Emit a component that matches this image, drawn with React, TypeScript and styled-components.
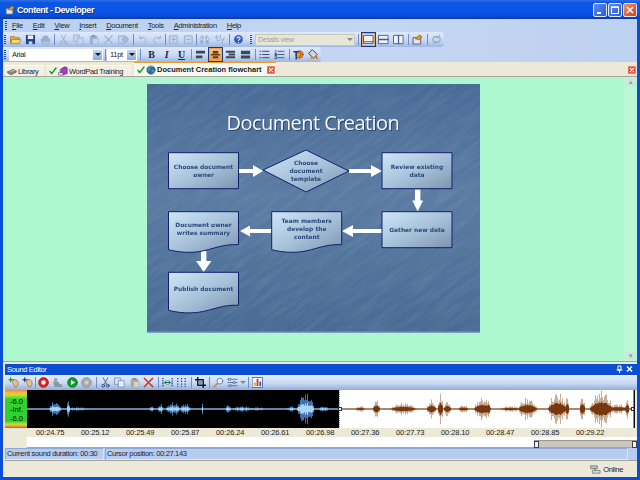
import React, { ReactNode } from "react";
import styled, { createGlobalStyle } from "styled-components";

const UI_FONT = `"Liberation Sans", Arial, sans-serif`;

const GlobalStyle = createGlobalStyle`
  html, body {
    margin: 0;
    padding: 0;
    overflow: hidden;
    background: #0a52de;
  }
  svg {
    flex: none;
  }
`;

const Window = styled.div`
  width: 640px;
  height: 480px;
  box-sizing: border-box;
  display: flex;
  flex-direction: column;
  padding: 0 3px 3px;
  background: #0a4ed8;
  font-family: ${UI_FONT};
  font-size: 7.5px;
  letter-spacing: -0.32px;
  color: #1a1a1a;
`;

const TitleBar = styled.div`
  height: 19px;
  flex: none;
  margin: 0 -3px;
  padding: 1px 3px 0 5px;
  box-sizing: border-box;
  display: flex;
  align-items: center;
  gap: 1px;
  background: linear-gradient(#2a70ea 0, #0c55e2 3px, #0a55e8 12px, #0a48d0 17px, #06389f 100%);
`;

const TitleText = styled.span`
  flex: 1;
  margin-left: 1px;
  color: #fff;
  font-size: 9px;
  font-weight: bold;
  letter-spacing: -0.45px;
  text-shadow: 1px 1px 0 #0a2f90;
`;

const WinButton = styled.div<{ $red?: boolean }>`
  width: 14px;
  height: 14px;
  box-sizing: border-box;
  border: 1px solid #dfe8fb;
  border-radius: 2px;
  background: ${(p) => (p.$red ? "linear-gradient(135deg,#f0905c,#d8401c)" : "linear-gradient(135deg,#5c8cf0,#2a58d8)")};
  display: flex;
  align-items: center;
  justify-content: center;
`;

const Chrome = styled.div`
  flex: none;
  background: linear-gradient(90deg, #bcd0ef, #c3d6f3 60%, #bdd1f0);
`;

const MenuBar = styled.div`
  height: 13px;
  display: flex;
  align-items: center;
  padding-left: 2px;
`;

const MenuItem = styled.span`
  margin: 0 10px 0 0;
  color: #20242c;
  &:first-of-type {
    margin-left: 1px;
  }
`;

const Grip = styled.div<{ $gap?: number }>`
  width: 2px;
  height: 9px;
  margin-right: ${(p) => p.$gap ?? 4}px;
  flex: none;
  background-image: linear-gradient(#2c4a80 50%, transparent 50%);
  background-size: 2px 2px;
`;

const ToolRow = styled.div`
  height: 15px;
  display: flex;
`;

const Toolbar = styled.div<{ $width: number; $pad?: number }>`
  width: ${(p) => p.$width}px;
  height: 15px;
  flex: none;
  box-sizing: border-box;
  padding-left: ${(p) => p.$pad ?? 1}px;
  display: flex;
  align-items: center;
  background: linear-gradient(#dfe9f9, #c9d9f3 55%, #9db7e2);
`;

const EndedBar = styled(Toolbar)`
  border-radius: 0 3px 3px 0;
`;

const ToolButton = styled.div<{ $active?: boolean; $pale?: boolean }>`
  width: 15px;
  height: 15px;
  flex: none;
  box-sizing: border-box;
  display: flex;
  align-items: center;
  justify-content: center;
  ${(p) =>
    p.$active &&
    `border: 1px solid #1c3c80; background: linear-gradient(#f8cc8c, #f09840); box-shadow: inset 0 0 0 1px #f0a050;`}
  ${(p) => p.$pale && `background: #dce8f8;`}
`;

const Sep = styled.div<{ $w?: number }>`
  width: ${(p) => p.$w ?? 4}px;
  height: 11px;
  flex: none;
  background: linear-gradient(#6f8fc4, #6f8fc4) center / 1px 100% no-repeat;
`;

const Combo = styled.div<{ $width: number; $disabled?: boolean }>`
  width: ${(p) => p.$width}px;
  height: 12px;
  flex: none;
  box-sizing: border-box;
  display: flex;
  align-items: center;
  justify-content: space-between;
  background: ${(p) => (p.$disabled ? "#e8e6d6" : "#fff")};
  color: ${(p) => (p.$disabled ? "#a2a49c" : "#202020")};
  padding-left: 2px;
  border: 1px solid ${(p) => (p.$disabled ? "#c4c8c4" : "#fff")};
`;

const ComboArrow = styled.div<{ $disabled?: boolean }>`
  width: 9px;
  height: 100%;
  display: flex;
  align-items: center;
  justify-content: center;
  background: ${(p) => (p.$disabled ? "transparent" : "linear-gradient(#c4d5f1, #8faad8)")};
  &::after {
    content: "";
    border: 3px solid transparent;
    border-top: 3px solid ${(p) => (p.$disabled ? "#888" : "#101828")};
    border-bottom: 0;
  }
`;

const TabStrip = styled.div`
  height: 15px;
  flex: none;
  box-sizing: border-box;
  display: flex;
  align-items: flex-end;
  padding-left: 2px;
  background: #ece9d8;
  border-bottom: 1px solid #a8a69c;
`;

const Tab = styled.div<{ $width: number; $active?: boolean }>`
  width: ${(p) => p.$width}px;
  height: ${(p) => (p.$active ? 14 : 11)}px;
  margin-right: ${(p) => (p.$active ? 0 : 3)}px;
  box-sizing: border-box;
  display: flex;
  align-items: center;
  gap: 1px;
  padding-left: ${(p) => (p.$active ? 3 : 2)}px;
  white-space: nowrap;
  background: ${(p) => (p.$active ? "#f8f8f2" : "#f2f0e4")};
  border-top: 1px solid ${(p) => (p.$active ? "#e69a28" : "#fff")};
  font-weight: ${(p) => (p.$active ? "bold" : "normal")};
  letter-spacing: ${(p) => (p.$active ? "0" : "-0.36px")};
  color: #202020;
`;

const TabClose = styled.div`
  width: 8px;
  height: 8px;
  margin-left: 4px;
  flex: none;
  display: flex;
`;

const StripSpacer = styled.div`
  flex: 1;
`;

const StripClose = styled.div`
  width: 8px;
  height: 8px;
  margin: 0 1px 2px 0;
  display: flex;
`;

const ContentRow = styled.div`
  flex: 1;
  min-height: 0;
  display: flex;
  background: #aef8cf;
`;

const Canvas = styled.div`
  flex: 1;
  display: flex;
  justify-content: center;
  padding-top: 7px;
`;

const SlideSvg = styled.svg`
  width: 333px;
  height: 249px;
  display: block;
  filter: blur(0.3px);
`;

const ScrollTrack = styled.div`
  width: 13px;
  flex: none;
  display: flex;
  flex-direction: column;
  justify-content: space-between;
  background: #b9f7d6;
`;

const ScrollBtn = styled.div`
  height: 8px;
  margin: 1px;
  background: #cfe6dc;
  display: flex;
  align-items: center;
  justify-content: center;
  color: #8a9aa8;
  font-size: 6px;
  line-height: 1;
`;

const SoundPanel = styled.div`
  flex: none;
  background: #ece9d8;
  border-top: 1px solid #a8a69c;
  padding: 2px 0 0 2px;
  display: flex;
  flex-direction: column;
`;

const PanelHeader = styled.div`
  height: 11px;
  display: flex;
  align-items: center;
  padding: 0 2px;
  color: #fff;
  background: #0a4fd2;
`;

const PanelTitle = styled.span`
  flex: 1;
`;

const SoundBar = styled.div`
  height: 15px;
  display: flex;
  align-items: center;
  padding-left: 1px;
  background: linear-gradient(#e4edfb, #c8d9f3 55%, #92aedc);
`;

const SoundBtn = styled.div<{ $w?: number }>`
  width: ${(p) => p.$w ?? 14.5}px;
  height: 15px;
  flex: none;
  display: flex;
  align-items: center;
  justify-content: center;
`;

const WaveRow = styled.div`
  height: 38px;
  display: flex;
`;

const Meter = styled.div`
  width: 22px;
  flex: none;
  box-sizing: border-box;
  display: flex;
  flex-direction: column;
  justify-content: center;
  padding: 3px 4px 0 0;
  text-align: right;
  font-size: 7.6px;
  letter-spacing: 0;
  line-height: 8.6px;
  color: #061006;
  background: linear-gradient(#e88a48 0, #f4c040 8%, #b8e040 14%, #30d030 24%, #30d030 82%, #c0e040 90%, #f0a030 95%, #e04828 100%);
`;

const WaveSvg = styled.svg`
  width: 608px;
  height: 38px;
  display: block;
`;

const RulerRow = styled.div`
  height: 9px;
  margin-left: 22px;
  display: flex;
  padding-left: 9px;
  background: #ece9d8;
`;

const RulerLabel = styled.span`
  width: 45px;
  flex: none;
  line-height: 10px;
  letter-spacing: -0.1px;
  color: #202020;
`;

const ScrollRow = styled.div`
  height: 10px;
  margin-left: 22px;
  display: flex;
  justify-content: flex-end;
  background: #fff;
  border-bottom: 1px solid #a8a69c;
`;

const WaveScroll = styled.div`
  width: 103px;
  height: 7px;
  margin-top: 3px;
  box-sizing: border-box;
  display: flex;
  justify-content: space-between;
  background: #cdc6bc;
  border-top: 1px solid #9c9890;
`;

const ScrollHandle = styled.div`
  width: 3px;
  height: 5px;
  background: #f4f4f0;
  border: 1px solid #404040;
`;

const StatusBar = styled.div`
  height: 12px;
  display: flex;
  gap: 1px;
  background: #b6cdf1;
  padding-right: 9px;
  border-bottom: 1px solid #a8a69c;
`;

const StatusPane = styled.div<{ $width?: number }>`
  ${(p) => (p.$width ? `width: ${p.$width}px; flex: none;` : "flex: 1;")}
  box-sizing: border-box;
  padding-left: 1px;
  line-height: 10px;
  white-space: nowrap;
  color: #1a2433;
  border: 1px solid #8fa9d2;
  border-right-color: #d9e5f8;
  border-bottom-color: #d9e5f8;
`;

const BottomBar = styled.div`
  flex: 1;
  min-height: 16px;
  display: flex;
  align-items: center;
  justify-content: flex-end;
  gap: 2px;
  padding-right: 1px;
  background: #ece9d8;
  color: #1a1a1a;
`;

const ResizeGrip = styled.div`
  width: 6px;
  height: 6px;
  margin: 6px 0 0 5px;
  background-image: radial-gradient(#a8a498 40%, transparent 45%);
  background-size: 2px 2px;
`;

/* ---------- icons ---------- */

const GRAY = "#98adcf";

const IconSvg = ({ size = 11, children }: { size?: number; children: ReactNode }) => (
  <svg width={size} height={size} viewBox="0 0 12 12" fill="none" strokeLinecap="round" strokeLinejoin="round">
    {children}
  </svg>
);

const icons: Record<string, ReactNode> = {
  open: (
    <>
      <path d="M1 3h4l1 1h4v6H1z" fill="#e9b040" stroke="#a06a10" strokeWidth=".8" />
      <path d="M2.5 6H12l-2 4.5H1z" fill="#f8d878" stroke="#b07a18" strokeWidth=".8" />
    </>
  ),
  save: (
    <>
      <path d="M1 1h10v10H1z" fill="#23408f" />
      <path d="M3 1.5h6v4H3z" fill="#e8eef8" />
      <path d="M4 8h4v3H4z" fill="#c8d0e0" />
    </>
  ),
  print: (
    <>
      <path d="M3 2h6v3H3zM1 5h10v4H1z" fill={GRAY} />
      <path d="M3 8h6v3H3z" fill="#b4c6e4" stroke={GRAY} strokeWidth=".7" />
    </>
  ),
  cut: (
    <>
      <path d="M3.5 1l4 7M8.5 1l-4 7" stroke={GRAY} strokeWidth="1" />
      <circle cx="3.5" cy="9.5" r="1.5" stroke={GRAY} />
      <circle cx="8.5" cy="9.5" r="1.5" stroke={GRAY} />
    </>
  ),
  copy: (
    <>
      <path d="M1 1h6v7H1z" fill="#c5d5ee" stroke={GRAY} strokeWidth=".8" />
      <path d="M5 4h6v7H5z" fill="#c5d5ee" stroke={GRAY} strokeWidth=".8" />
    </>
  ),
  paste: (
    <>
      <path d="M2 2h8v9H2z" fill={GRAY} />
      <path d="M4 1h4v2H4z" fill="#8098c0" />
      <path d="M5 5h6v6H5z" fill="#c5d5ee" stroke={GRAY} strokeWidth=".6" />
    </>
  ),
  del: <path d="M2 2l8 8M10 2l-8 8" stroke={GRAY} strokeWidth="1.3" />,
  preview: (
    <>
      <path d="M1 2h7v8H1z" fill="#c5d5ee" stroke={GRAY} />
      <circle cx="8" cy="6" r="3" fill="#a8bcdc" stroke={GRAY} />
    </>
  ),
  undo: <path d="M3 5c2-3 7-2 7 2 0 2-1 3-3 3M3 2v3h3" stroke={GRAY} strokeWidth="1" />,
  redo: <path d="M9 5C7 2 2 3 2 7c0 2 1 3 3 3M9 2v3H6" stroke={GRAY} strokeWidth="1" />,
  pageAdd: (
    <>
      <path d="M2 2h8v8H2z" fill="#c5d5ee" stroke={GRAY} />
      <path d="M4 6h4M6 4v4" stroke={GRAY} />
    </>
  ),
  pageDel: (
    <>
      <path d="M2 2h8v8H2z" fill="#c5d5ee" stroke={GRAY} />
      <path d="M4 6h4" stroke={GRAY} />
    </>
  ),
  find: (
    <>
      <path d="M1 6l2-4h1v5M11 6L9 2H8v5M5 4h2" stroke={GRAY} strokeWidth="1" />
      <circle cx="3" cy="8.5" r="2" fill={GRAY} />
      <circle cx="9" cy="8.5" r="2" fill={GRAY} />
    </>
  ),
  replace: (
    <>
      <path d="M1 4l2-2 2 2M3 2v5h3" stroke={GRAY} strokeWidth="1" />
      <path d="M7 1v4l3 2 1-3M9 7v4" stroke={GRAY} strokeWidth="1" />
    </>
  ),
  help: (
    <>
      <circle cx="6" cy="6" r="5.2" fill="#2a58c8" stroke="#e8eef8" strokeWidth=".7" />
      <path d="M4.4 4.5c.3-1.6 3.4-1.6 3.4 .2 0 1.2-1.8 1.2-1.8 2.5" stroke="#fff" strokeWidth="1.1" />
      <circle cx="6" cy="9.3" r=".7" fill="#fff" />
      <path d="M8 1l3 3" stroke="#f0a030" strokeWidth="1" />
    </>
  ),
  viewFull: (
    <>
      <path d="M1 1.5h10v9H1z" fill="#f0f4fa" stroke="#34507e" />
      <path d="M1 8.5h10" stroke="#34507e" />
    </>
  ),
  viewH: (
    <>
      <path d="M1 1.5h10v9H1z" fill="#eef2f8" stroke="#46608c" />
      <path d="M1 6h10" stroke="#46608c" strokeWidth="1.4" />
    </>
  ),
  viewV: (
    <>
      <path d="M1 1.5h10v9H1z" fill="#eef2f8" stroke="#46608c" />
      <path d="M6 1.5v9" stroke="#46608c" strokeWidth="1.4" />
    </>
  ),
  publish: (
    <>
      <path d="M1.5 4h8v7h-8z" fill="#e4e4e4" stroke="#4c5c78" />
      <path d="M4 5l4-4 3 2-3 3z" fill="#d8a020" stroke="#805010" strokeWidth=".7" />
    </>
  ),
  sync: (
    <>
      <path d="M2 7a4 4 0 0 1 7-3M10 5a4 4 0 0 1-7 3" stroke="#8fb0b8" strokeWidth="1.4" />
      <path d="M9 1v3H6M3 11V8h3" stroke="#8fb0b8" strokeWidth="1" />
    </>
  ),
  alignLeft: <path d="M1 2h10v3H1zM1 7h7v3H1z" fill="#3c4658" />,
  alignCenter: (
    <>
      <path d="M3 2h6v3H3z" fill="#6a3c20" />
      <path d="M1 5.5h10v1.5H1zM3 8h6v2H3z" fill="#5a3824" />
    </>
  ),
  alignRight: <path d="M1 2h10v2H1zM4 5h7v2H4zM1 8h10v2H1z" fill="#3c4658" />,
  justify: <path d="M1 2h10v3.6H1zM1 7h10v3.4H1z" fill="#3c4658" />,
  bullets: <path d="M4 2.5h7M4 6h7M4 9.5h7M1 2.5h1M1 6h1M1 9.5h1" stroke="#2c4068" strokeWidth="1" />,
  numbers: <path d="M4.5 2.5H11M4.5 6H11M4.5 9.5H11M2 1.5v2M1 5h2v1H1v1h2M1 8.5h2v2H1" stroke="#2c4068" strokeWidth=".9" />,
  effects: (
    <>
      <circle cx="7" cy="6" r="4" fill="#e8a020" stroke="#a04010" strokeWidth=".8" />
      <path d="M1 3h5M3.5 3v8" stroke="#283c70" strokeWidth="1.6" />
      <path d="M7 3l2 3-2 3" stroke="#d02010" strokeWidth="1" />
    </>
  ),
  fill: (
    <>
      <path d="M5 1l5 5-4 4-5-5z" fill="#d8d8d8" stroke="#283048" strokeWidth="1" />
      <path d="M9 7c1.5 1.5 2 3 1 4s-2-1-1-4z" fill="#e86018" />
      <path d="M2 9h3v2H2z" fill="#e8a020" />
    </>
  ),
  library: (
    <>
      <path d="M1 7l6-3 4 2-6 3z" fill="#c0c0b8" stroke="#505050" strokeWidth=".8" />
      <path d="M1 7v1.5L5 10.5 11 7.5V6" fill="#888" stroke="#505050" strokeWidth=".7" />
    </>
  ),
  check: <path d="M1.5 6.5l2.5 3.5L10.5 1.5" stroke="#16a018" strokeWidth="2.2" />,
  wordpad: (
    <>
      <path d="M3 4l5-3 3 1v7l-6 2-2-2z" fill="#a040c0" stroke="#50206c" strokeWidth=".7" />
      <path d="M1 8h5v3H1z" fill="#e8e0f0" stroke="#50206c" strokeWidth=".6" />
    </>
  ),
  globe: (
    <>
      <circle cx="6" cy="6" r="5" fill="#2c68c0" stroke="#1c3c78" strokeWidth=".6" />
      <path d="M3 3c2 0 3 1 2 3S3 7 2 6M7 6c2-1 3 0 3 1s-2 3-3 2z" fill="#50a848" />
      <path d="M4 1.8c1.5-.7 3-.5 4 .2" stroke="#e8f0ff" strokeWidth=".7" />
    </>
  ),
  close: (
    <>
      <path d="M0 0h12v12H0z" fill="#e8503a" />
      <path d="M.6.6h10.8v10.8H.6z" stroke="#f8b8a0" strokeWidth=".8" />
      <path d="M3.5 3.5l5 5M8.5 3.5l-5 5" stroke="#fff" strokeWidth="1.6" />
    </>
  ),
  earAdd: (
    <>
      <path d="M1 3h4M3 1v4" stroke="#108820" strokeWidth="1.2" />
      <path d="M6 3c3-1 5 1 5 4s-2 4-3 4-1-2-2-3-2-3 0-5z" fill="#e8c090" stroke="#8c6030" strokeWidth=".7" />
    </>
  ),
  earBlue: (
    <>
      <path d="M1 3h4M3 1v4" stroke="#102880" strokeWidth="1.2" />
      <path d="M6 3c3-1 5 1 5 4s-2 4-3 4-1-2-2-3-2-3 0-5z" fill="#e8c090" stroke="#8c6030" strokeWidth=".7" />
    </>
  ),
  record: (
    <>
      <circle cx="6" cy="6" r="5.4" fill="#e02018" stroke="#901010" strokeWidth=".6" />
      <circle cx="6" cy="6" r="2.4" fill="#fff" />
    </>
  ),
  people: (
    <>
      <circle cx="4" cy="3" r="2" fill="#9aa2ae" />
      <path d="M1 5h6l1 3h3v3H3z" fill="#8a94a4" />
    </>
  ),
  play: (
    <>
      <circle cx="6" cy="6" r="5.4" fill="#149830" stroke="#0c6820" strokeWidth=".6" />
      <path d="M4.4 3.2l4.4 2.8-4.4 2.8z" fill="#fff" />
    </>
  ),
  stop: (
    <>
      <circle cx="6" cy="6" r="5.4" fill="#a8a8a8" stroke="#808890" strokeWidth=".6" />
      <path d="M4 4h4v4H4z" fill="#d0d0d0" />
    </>
  ),
  scissors: (
    <>
      <path d="M3.5 1l4 7M8.5 1l-4 7" stroke="#506080" strokeWidth="1" />
      <circle cx="3.5" cy="9.5" r="1.5" stroke="#2c3c80" />
      <circle cx="8.5" cy="9.5" r="1.5" stroke="#2c3c80" />
    </>
  ),
  copyBlue: (
    <>
      <path d="M1 1h6v7H1z" fill="#d8e4f8" stroke="#7088b8" strokeWidth=".8" />
      <path d="M5 4h6v7H5z" fill="#e8eefa" stroke="#7088b8" strokeWidth=".8" />
    </>
  ),
  pasteGray: (
    <>
      <path d="M2 2h8v9H2z" fill="#b0a898" />
      <path d="M4 1h4v2H4z" fill="#908878" />
      <path d="M5 5h6v6H5z" fill="#d8d4cc" stroke="#a8a498" strokeWidth=".6" />
    </>
  ),
  redX: <path d="M1.5 1.5l9 9M10.5 1.5l-9 9" stroke="#e03818" strokeWidth="1.6" />,
  fit: (
    <>
      <path d="M1 1v10M11 1v10" stroke="#1030b0" strokeWidth="1.3" strokeDasharray="1.5 1" strokeLinecap="butt" />
      <path d="M3 6h6M3 6l2-2M3 6l2 2M9 6L7 4M9 6L7 8" stroke="#107040" strokeWidth="1" />
    </>
  ),
  markers: <path d="M2 1v10M6 1v10M10 1v10" stroke="#1030b0" strokeWidth="1.3" strokeDasharray="1.5 1.5" strokeLinecap="butt" />,
  crop: (
    <>
      <path d="M3 0v9h9M0 3h9v9" stroke="#101828" strokeWidth="1.6" />
      <path d="M4 4h4v4H4z" fill="#8098c8" />
    </>
  ),
  zoom: (
    <>
      <circle cx="7.5" cy="4.5" r="3.2" fill="#e8f0fa" stroke="#6880a8" />
      <path d="M5 7l-4 4" stroke="#c89030" strokeWidth="1.8" />
    </>
  ),
  list: (
    <>
      <path d="M1 2.5h10M1 6h10M1 9.5h10" stroke="#5878b0" strokeWidth="1.2" />
      <path d="M2 1.5h2v2H2zM7 5h2v2H7zM3 8.5h2v2H3z" fill="#e8f0fa" stroke="#304878" strokeWidth=".6" />
    </>
  ),
  spectrum: (
    <>
      <path d="M.5.5h11v11H.5z" fill="#f4f6fa" stroke="#5068a0" />
      <path d="M2 10V6h2v4z" fill="#e8a020" />
      <path d="M5 10V2h2v8z" fill="#e03818" />
      <path d="M8 10V5h2v5z" fill="#2860c8" />
    </>
  ),
  online: (
    <>
      <path d="M1 2h7v3H1z" fill="#c0c4cc" stroke="#404850" strokeWidth=".6" />
      <path d="M3 7h8v3H3z" fill="#d8dce0" stroke="#404850" strokeWidth=".6" />
      <path d="M5 5l1 2" stroke="#208830" strokeWidth="1" />
    </>
  ),
};

const Icon = ({ name, size }: { name: string; size?: number }) => <IconSvg size={size}>{icons[name]}</IconSvg>;

const TextIcon = styled.span<{ $style: string }>`
  font-family: "Liberation Serif", serif;
  font-size: 10px;
  font-weight: bold;
  color: #202838;
  font-style: ${(p) => (p.$style === "I" ? "italic" : "normal")};
  text-decoration: ${(p) => (p.$style === "U" ? "underline" : "none")};
`;

/* ---------- slide ---------- */

type Shape = { x: number; y: number; doc?: boolean; lines: string[] };

const shapes: Shape[] = [
  { x: 21.5, y: 68.7, lines: ["Choose document", "owner"] },
  { x: 235, y: 68.7, lines: ["Review existing", "data"] },
  { x: 235, y: 127.7, lines: ["Gather new data"] },
  { x: 124.7, y: 127.7, doc: true, lines: ["Team members", "develop the", "content"] },
  { x: 21.5, y: 127.7, doc: true, lines: ["Document owner", "writes summary"] },
  { x: 21.5, y: 188.3, doc: true, lines: ["Publish document"] },
];

const SHAPE_W = 70;
const SHAPE_H = 36;
const SLIDE_TEXT = { fontFamily: `"DejaVu Sans", sans-serif`, fontWeight: 700, fontSize: 5.9, letterSpacing: 0, fill: "#274a7c" };

const ShapeText = ({ cx, cy, lines }: { cx: number; cy: number; lines: string[] }) => (
  <text textAnchor="middle" {...SLIDE_TEXT}>
    {lines.map((line, i) => (
      <tspan key={line} x={cx} y={cy + (i - (lines.length - 1) / 2) * 8 + 2}>
        {line}
      </tspan>
    ))}
  </text>
);

const Arrow = ({ d }: { d: string }) => <path d={d} fill="#fff" />;

const Slide = () => (
  <SlideSvg viewBox="0 0 333 249">
    <defs>
      <linearGradient id="slideBg" x1="0" y1="0" x2="0" y2="1">
        <stop offset="0" stopColor="#486b96" />
        <stop offset=".45" stopColor="#5a7ba2" />
        <stop offset=".8" stopColor="#4f7199" />
        <stop offset="1" stopColor="#486b93" />
      </linearGradient>
      <linearGradient id="shapeBg" x1="0" y1="0" x2="1" y2="1">
        <stop offset="0" stopColor="#cfe6f8" />
        <stop offset=".55" stopColor="#a5bfd8" />
        <stop offset="1" stopColor="#7d93ad" />
      </linearGradient>
      <filter id="grain" x="0" y="0" width="100%" height="100%">
        <feTurbulence type="fractalNoise" baseFrequency="0.03 0.22" numOctaves="3" seed="7" />
        <feColorMatrix values="0 0 0 0 0.8  0 0 0 0 0.87  0 0 0 0 0.95  0.9 0 0 0 -0.33" />
      </filter>
    </defs>
    <rect width="333" height="249" fill="url(#slideBg)" />
    <g transform="rotate(-35 166 125)" opacity=".2">
      <rect x="-100" y="-100" width="540" height="450" filter="url(#grain)" />
    </g>
    <rect x="0" y="247.5" width="333" height="1.5" fill="#7c9cc0" />
    <text x="167" y="47" textAnchor="middle" textLength="173" fontFamily={`"Open Sans", sans-serif`} fontSize="20" fill="#0c1c38" opacity=".55">
      Document Creation
    </text>
    <text x="166" y="46" textAnchor="middle" textLength="173" fontFamily={`"Open Sans", sans-serif`} fontSize="20" fill="#f4f8fc">
      Document Creation
    </text>

    <Arrow d="M92 85h14v-4l10 6-10 6v-4H92z" />
    <Arrow d="M202 85h22v-4l11 6-11 6v-4h-22z" />
    <Arrow d="M268 105.5h5.4v11h2.7l-5.4 11-5.4-11h2.7z" />
    <Arrow d="M235 145h-29v-4l-11 6 11 6v-4h29z" />
    <Arrow d="M125 145h-22v-3.5l-10 5.5 10 5.5V149h22z" />
    <Arrow d="M54 167h5.4v10h5l-7.7 11-7.7-11h5z" />

    <path d="M116 86L159 66l43 21-43 21z" fill="url(#shapeBg)" stroke="#12206c" strokeWidth="1" />
    <ShapeText cx={159} cy={87} lines={["Choose", "document", "template"]} />

    {shapes.map((s) => (
      <g key={s.lines[0]}>
        <path
          d={
            s.doc
              ? `M${s.x} ${s.y}h${SHAPE_W}v33c-16 -1 -26 5 -40 7c-12 1.5 -22 0 -30 -2z`
              : `M${s.x} ${s.y}h${SHAPE_W}v${SHAPE_H}h-${SHAPE_W}z`
          }
          fill="url(#shapeBg)"
          stroke="#12206c"
          strokeWidth="1"
        />
        <ShapeText cx={s.x + SHAPE_W / 2} cy={s.y + (s.doc ? 17 : SHAPE_H / 2)} lines={s.lines} />
      </g>
    ))}
  </SlideSvg>
);

/* ---------- wave form ---------- */

type Burst = [number, number, number]; // centre x, half width, height

const darkBursts: Burst[] = [
  [27, 6, 8], [31, 3, 6], [41, 1.5, 11], [50, 12, 2], [124, 3, 3], [133, 3, 6], [146, 8, 7], [158, 6, 6],
  [175, 1, 6], [201, 3, 5], [215, 12, 3], [230, 8, 2], [264, 5, 3], [278, 9, 17], [284, 3, 10], [296, 6, 3],
];

const lightBursts: Burst[] = [
  [333, 6, 3], [349, 4, 9], [376, 14, 6], [404, 5, 9], [413, 3, 15], [420, 4, 8], [436, 6, 4], [455, 9, 11],
  [461, 2, 13], [483, 12, 3], [500, 10, 11], [530, 10, 16], [540, 2, 14], [555, 3, 13], [574, 12, 18],
  [590, 14, 5], [600, 2, 12],
];

const envelope = (x: number, bursts: Burst[], floor: number) => {
  let amp = 0.4;
  for (const [c, w, h] of bursts) {
    const d = Math.abs(x - c) / w;
    if (d < 1) amp = Math.max(amp, h * (1 - d * d));
  }
  const wobble = floor + (1 - floor) * Math.abs(Math.sin(x * 1.7) * Math.cos(x * 0.63));
  return amp * wobble;
};

const barsPath = (from: number, to: number, bursts: Burst[], scale: number, floor: number) => {
  let d = "";
  for (let x = from; x < to; x++) {
    const a = Math.max(0.5, envelope(x, bursts, floor) * scale);
    d += `M${x + 0.5} ${19 - a}V${19 + a}`;
  }
  return d;
};

const CUT = 312;

const Wave = () => (
  <WaveSvg viewBox="0 0 608 38">
    <rect width={CUT} height="38" fill="#000" />
    <rect x={CUT} width={608 - CUT} height="38" fill="#fff" />
    <path d={barsPath(0, CUT, darkBursts, 1, 0.5)} stroke="#3f74ad" />
    <path d={barsPath(0, CUT, darkBursts, 0.4, 0.5)} stroke="#a9d4f4" />
    <path d={barsPath(CUT, 608, lightBursts, 1.1, 0.45)} stroke="#c9ac96" />
    <path d={barsPath(CUT, 608, lightBursts, 0.42, 0.75)} stroke="#78380f" />
    <path d={`M${CUT} 0V38`} stroke="#182848" strokeDasharray="1 1" />
    <rect x={CUT - 0.5} y="17.5" width="3" height="3" fill="#fff" stroke="#303030" />
    <rect x="604.5" y="17.5" width="3" height="3" fill="#fff" stroke="#303030" />
    <rect x="606.5" width="1.5" height="38" fill="#101010" />
  </WaveSvg>
);

/* ---------- data ---------- */

const menu = ["File", "Edit", "View", "Insert", "Document", "Tools", "Administration", "Help"];
const times = ["24.75", "25.12", "25.49", "25.87", "26.24", "26.61", "26.98", "27.36", "27.73", "28.10", "28.47", "28.85", "29.22"];

const Btn = ({ name, active, pale }: { name: string; active?: boolean; pale?: boolean }) => (
  <ToolButton $active={active} $pale={pale}>
    <Icon name={name} />
  </ToolButton>
);

const Snd = ({ name, w }: { name: string; w?: number }) => (
  <SoundBtn $w={w}>
    <Icon name={name} />
  </SoundBtn>
);

const MainToolbar = () => (
  <ToolRow>
    <EndedBar $width={243}>
      <Grip $gap={2} />
      <Btn name="open" />
      <Btn name="save" />
      <Btn name="print" />
      <Sep $w={3} />
      <Btn name="cut" />
      <Btn name="copy" />
      <Btn name="paste" />
      <Btn name="del" />
      <Btn name="preview" />
      <Sep />
      <Btn name="undo" />
      <Btn name="redo" />
      <Sep $w={1} />
      <Btn name="pageAdd" />
      <Btn name="pageDel" />
      <Sep $w={1} />
      <Btn name="find" />
      <Btn name="replace" />
      <Sep />
      <Btn name="help" />
    </EndedBar>
    <EndedBar $width={198} $pad={4}>
      <Grip $gap={3} />
      <Combo $width={100} $disabled>
        Details view
        <ComboArrow $disabled />
      </Combo>
      <Sep $w={6} />
      <Btn name="viewFull" active pale />
      <Btn name="viewH" />
      <Btn name="viewV" />
      <Sep />
      <Btn name="publish" />
      <Sep />
      <Btn name="sync" />
    </EndedBar>
  </ToolRow>
);

const FormatToolbar = () => (
  <ToolRow>
    <EndedBar $width={318}>
      <Grip $gap={3} />
      <Combo $width={94}>
        Arial
        <ComboArrow />
      </Combo>
      <Sep />
      <Combo $width={30}>
        11pt
        <ComboArrow />
      </Combo>
      <Sep $w={7} />
      <ToolButton>
        <TextIcon $style="B">B</TextIcon>
      </ToolButton>
      <ToolButton>
        <TextIcon $style="I">I</TextIcon>
      </ToolButton>
      <ToolButton>
        <TextIcon $style="U">U</TextIcon>
      </ToolButton>
      <Sep />
      <Btn name="alignLeft" />
      <Btn name="alignCenter" active />
      <Btn name="alignRight" />
      <Btn name="justify" />
      <Sep />
      <Btn name="bullets" />
      <Btn name="numbers" />
      <Sep />
      <Btn name="effects" />
      <Btn name="fill" />
    </EndedBar>
  </ToolRow>
);

const SoundToolbar = () => (
  <SoundBar>
    <Snd name="earAdd" />
    <Snd name="earBlue" />
    <Sep $w={1} />
    <Snd name="record" />
    <Snd name="people" />
    <Snd name="play" />
    <Snd name="stop" />
    <Sep />
    <Snd name="scissors" />
    <Snd name="copyBlue" />
    <Snd name="pasteGray" />
    <Snd name="redX" />
    <Sep />
    <Snd name="fit" />
    <Snd name="markers" />
    <Sep />
    <Snd name="crop" />
    <Sep />
    <Snd name="zoom" />
    <Snd name="list" w={12} />
    <ComboArrow $disabled />
    <Sep $w={3} />
    <Snd name="spectrum" />
  </SoundBar>
);

export default function App() {
  return (
    <>
      <GlobalStyle />
      <Window>
        <TitleBar>
          <Icon name="publish" size={10} />
          <TitleText>Content - Developer</TitleText>
          <WinButton>
            <svg width="7" height="7" viewBox="0 0 7 7">
              <path d="M0 5h4v2H0z" fill="#fff" />
            </svg>
          </WinButton>
          <WinButton>
            <svg width="8" height="8" viewBox="0 0 8 8" fill="none">
              <path d="M.5 1.5h7v6h-7z" stroke="#fff" />
              <path d="M0 1h8" stroke="#fff" strokeWidth="1.4" />
            </svg>
          </WinButton>
          <WinButton $red>
            <svg width="8" height="8" viewBox="0 0 8 8">
              <path d="M1 1l6 6M7 1L1 7" stroke="#fff" strokeWidth="1.6" />
            </svg>
          </WinButton>
        </TitleBar>
        <Chrome>
          <MenuBar>
            <Grip />
            {menu.map((m) => (
              <MenuItem key={m}>
                <u>{m[0]}</u>
                {m.slice(1)}
              </MenuItem>
            ))}
          </MenuBar>
          <MainToolbar />
          <FormatToolbar />
        </Chrome>
        <TabStrip>
          <Tab $width={39}>
            <Icon name="library" size={10} />
            Library
          </Tab>
          <Tab $width={84}>
            <Icon name="check" size={8} />
            <Icon name="wordpad" size={10} />
            WordPad Training
          </Tab>
          <Tab $width={142} $active>
            <Icon name="check" size={8} />
            <Icon name="globe" size={10} />
            Document Creation flowchart
            <TabClose>
              <Icon name="close" size={8} />
            </TabClose>
          </Tab>
          <StripSpacer />
          <StripClose>
            <Icon name="close" size={8} />
          </StripClose>
        </TabStrip>
        <ContentRow>
          <Canvas>
            <Slide />
          </Canvas>
          <ScrollTrack>
            <ScrollBtn>▲</ScrollBtn>
            <ScrollBtn>▼</ScrollBtn>
          </ScrollTrack>
        </ContentRow>
        <SoundPanel>
          <PanelHeader>
            <PanelTitle>Sound Editor</PanelTitle>
            <svg width="9" height="9" viewBox="0 0 9 9" fill="none">
              <path d="M3 1h3v4H3zM1.5 5h6M4.5 5v3" stroke="#fff" />
            </svg>
            <svg width="11" height="9" viewBox="0 0 9 9" fill="none">
              <path d="M2 1.5l5 5M7 1.5l-5 5" stroke="#fff" strokeWidth="1.5" />
            </svg>
          </PanelHeader>
          <SoundToolbar />
          <WaveRow>
            <Meter>
              <span>-6.0</span>
              <span>-Inf.</span>
              <span>-6.0</span>
            </Meter>
            <Wave />
          </WaveRow>
          <RulerRow>
            {times.map((t) => (
              <RulerLabel key={t}>00:{t}</RulerLabel>
            ))}
          </RulerRow>
          <ScrollRow>
            <WaveScroll>
              <ScrollHandle />
              <ScrollHandle />
            </WaveScroll>
          </ScrollRow>
          <StatusBar>
            <StatusPane $width={99}>Current sound duration: 00:30</StatusPane>
            <StatusPane>Cursor position: 00:27.143</StatusPane>
          </StatusBar>
          <BottomBar>
            <Icon name="online" />
            Online
            <ResizeGrip />
          </BottomBar>
        </SoundPanel>
      </Window>
    </>
  );
}
